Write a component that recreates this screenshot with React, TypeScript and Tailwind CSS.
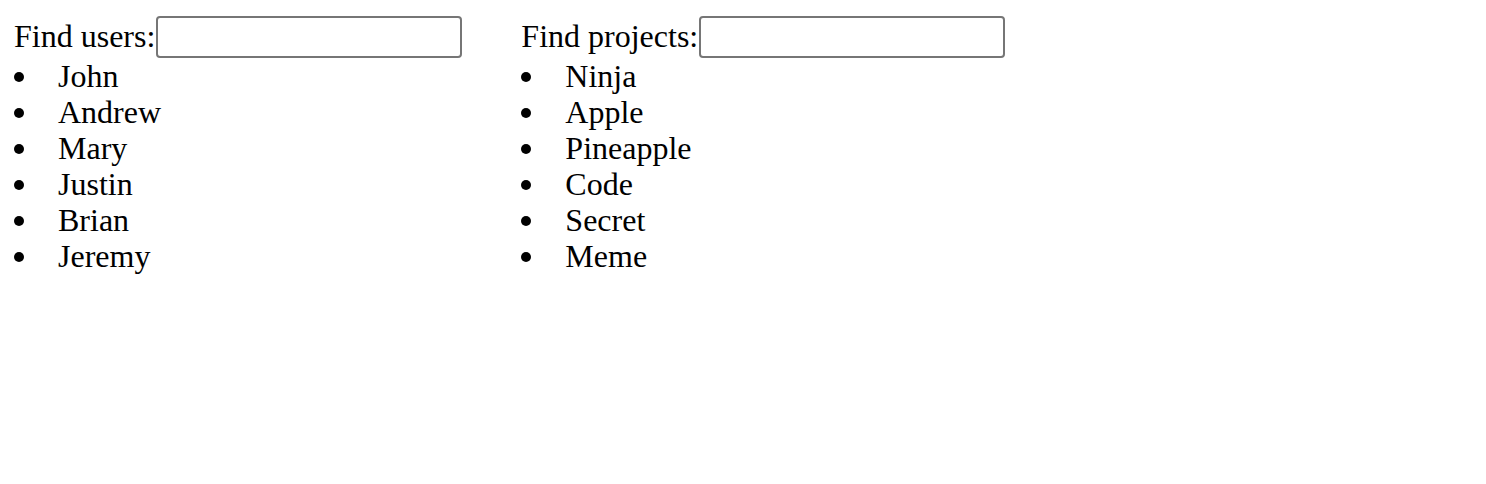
type SearchListProps = {
  id: string;
  label: string;
  items: string[];
};

const users = ["John", "Andrew", "Mary", "Justin", "Brian", "Jeremy"];
const projects = ["Ninja", "Apple", "Pineapple", "Code", "Secret", "Meme"];

function SearchList({ id, label, items }: SearchListProps) {
  return (
    <section>
      <div className="flex items-center gap-px">
        <label htmlFor={id} className="whitespace-nowrap pb-0.5">
          {label}
        </label>
        <input
          id={id}
          type="text"
          className="h-[42px] w-[306px] rounded-[4px] border-2 border-[#767676] bg-white px-1"
        />
      </div>
      <ul>
        {items.map((item) => (
          <li key={item} className="flex items-center gap-[34px]">
            <span className="mt-0.5 size-2.5 rounded-full bg-black" />
            {item}
          </li>
        ))}
      </ul>
    </section>
  );
}

export default function App() {
  return (
    <main className="flex min-h-screen items-start gap-[59px] bg-white px-[14px] pt-4 font-['Liberation_Serif',serif] text-[32px] leading-9 text-black">
      <SearchList id="find-users" label="Find users:" items={users} />
      <SearchList id="find-projects" label="Find projects:" items={projects} />
    </main>
  );
}
